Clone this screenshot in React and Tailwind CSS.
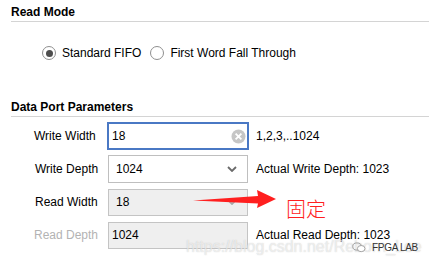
import React from "react";

function Radio({ checked }) {
  return (
    <span className="w-[14px] h-[14px] rounded-full border border-[#8f8f8f] bg-white flex items-center justify-center shrink-0">
      {checked && <span className="w-[7px] h-[7px] rounded-full bg-[#4d4d4d]" />}
    </span>
  );
}

function Chevron({ color = "#6a6a6a" }) {
  return (
    <svg width="10" height="6" viewBox="0 0 10 6" className="shrink-0">
      <path d="M1 1 L5 5 L9 1" fill="none" stroke={color} strokeWidth="1.8" />
    </svg>
  );
}

function ClearIcon() {
  return (
    <svg width="15" height="15" viewBox="0 0 15 15" className="shrink-0">
      <circle cx="7.5" cy="7.5" r="7" fill="#c6c6c6" />
      <path d="M4.6 4.6 L10.4 10.4 M10.4 4.6 L4.6 10.4" stroke="#ffffff" strokeWidth="1.8" />
    </svg>
  );
}

export default function App() {
  return (
    <div className="relative w-[429px] h-[265px] overflow-hidden bg-white text-black text-[12px] leading-[14px] font-['Liberation_Sans',Arial,sans-serif] pl-[11px]">
      <div className="pt-[5px] pb-[2px] border-b border-[#d4d4d4] font-bold">Read Mode</div>

      <div className="mt-[24px] h-[14px] flex items-center pl-[31px]">
        <Radio checked />
        <span className="ml-[6px]">Standard FIFO</span>
        <span className="ml-[9px]"><Radio /></span>
        <span className="ml-[6px]">First Word Fall Through</span>
      </div>

      <div className="mt-[40px] pb-[2px] border-b border-[#d4d4d4] font-bold">Data Port Parameters</div>

      <div className="mt-[5px] grid grid-cols-[96px_142px_1fr] auto-rows-[28px] gap-y-[5px] items-center">
        <span className="pl-[23px]">Write Width</span>
        <div className="h-[28px] border-2 border-[#4a78c4] bg-white flex items-center pl-[3px] pr-[1px]">
          <span className="flex-1">18</span>
          <ClearIcon />
        </div>
        <span className="pl-[7px]">1,2,3,..1024</span>

        <span className="pl-[24px]">Write Depth</span>
        <div className="h-[28px] mx-[1px] border border-[#bfbfbf] bg-white flex items-center pl-[7px] pr-[10px]">
          <span className="flex-1">1024</span>
          <Chevron />
        </div>
        <span className="pl-[7px]">Actual Write Depth: 1023</span>

        <span className="pl-[24px]">Read Width</span>
        <div className="h-[27px] mx-[1px] border border-[#c4c4c4] bg-[#efefef] flex items-center pl-[7px] pr-[10px]">
          <span className="flex-1">18</span>
          <Chevron color="#a8a8a8" />
        </div>
        <span />

        <span className="pl-[23px] text-[#b3b3b3]">Read Depth</span>
        <div className="h-[27px] mx-[1px] border border-[#c4c4c4] bg-[#efefef] flex items-center pl-[3px]">
          <span>1024</span>
        </div>
        <span className="pl-[7px]">Actual Read Depth: 1023</span>
      </div>

      {/* annotation arrow */}
      <svg className="absolute left-0 top-0 pointer-events-none" width="429" height="265" viewBox="0 0 429 265">
        <polygon points="193,200.5 258,196 257,190 276,199 257,208 258,203.5" fill="#ff1f1f" />
      </svg>
      <span className="absolute left-[286px] top-[198px] text-[20px] leading-[22px] text-[#ff2020] font-['Noto_Sans_CJK_SC',sans-serif] font-light">固定</span>

      {/* watermark */}
      <span
        className="absolute left-[186px] top-[238px] text-[16px] leading-[18px] text-white/60 font-['Liberation_Sans',Arial,sans-serif] whitespace-nowrap pointer-events-none"
        style={{ textShadow: "0 0 1px rgba(150,150,150,0.5)" }}
      >
        https://blog.csdn.net/Reborn_Lee
      </span>
      <div className="absolute left-[352px] top-[242px] flex items-center gap-[6px] pointer-events-none">
        <svg width="14" height="11" viewBox="0 0 14 11">
          <ellipse cx="5" cy="4.5" rx="4.3" ry="3.6" fill="none" stroke="#9a9a9a" strokeWidth="0.9" />
          <ellipse cx="9.2" cy="6.6" rx="3.8" ry="3.1" fill="white" stroke="#9a9a9a" strokeWidth="0.9" />
        </svg>
        <span className="text-[10px] leading-[11px] text-[#333] font-['Liberation_Sans',Arial,sans-serif] tracking-[-0.3px]">FPGA LAB</span>
      </div>
    </div>
  );
}
